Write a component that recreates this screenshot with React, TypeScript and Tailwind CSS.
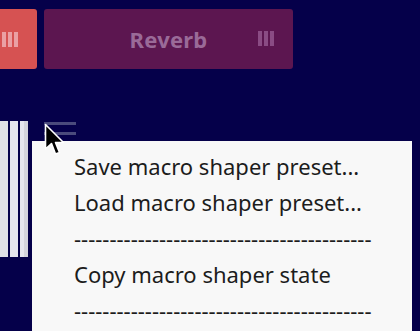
import React from "react";

function Grip({ className }: { className: string }) {
  return (
    <div className="flex gap-[2px]">
      <span className={`w-[4px] h-[15px] ${className}`} />
      <span className={`w-[4px] h-[15px] ${className}`} />
      <span className={`w-[4px] h-[15px] ${className}`} />
    </div>
  );
}

function Cursor() {
  return (
    <svg width="24" height="38" viewBox="0 0 24 38" className="absolute left-[44px] top-[123px]">
      <path
        d="M1.5 1.5 L1.5 26 L7.5 20.5 L11.5 31 L15.5 29.5 L11.5 19.5 L19.5 19.5 Z"
        fill="#000"
        stroke="#fff"
        strokeWidth="1.6"
        strokeLinejoin="round"
      />
    </svg>
  );
}

const dashes = "------------------------------------------";

const menuItems = [
  "Save macro shaper preset...",
  "Load macro shaper preset...",
  dashes,
  "Copy macro shaper state",
  dashes,
];

export default function App() {
  return (
    <div className="relative w-[420px] h-[331px] overflow-hidden bg-[#05004a] font-['Noto_Sans',sans-serif]">
      <div className="flex gap-[7px] pt-[9px]">
        <div className="w-[37px] h-[60px] bg-[#d65252] rounded-r-[3px] flex items-center pl-[2px]">
          <Grip className="bg-[#eaa0a4]" />
        </div>
        <div className="relative w-[249px] h-[60px] bg-[#5c1650] rounded-[3px] flex items-center justify-center">
          <span className="text-[22px] font-bold text-[#9a6a98] leading-none tracking-[0.2px]">Reverb</span>
          <div className="absolute left-[214px] top-[22px]">
            <Grip className="bg-[#8a4c84]" />
          </div>
        </div>
      </div>

      <div className="flex mt-[52px]">
        <div className="flex gap-[2px] h-[136px]">
          <span className="w-[8px] bg-[#e0e0e6]" />
          <span className="w-[8px] bg-[#e6e6ee]" />
          <span className="w-[8px] flex">
            <span className="w-[4px] bg-[#e6e6ee]" />
            <span className="w-[4px] bg-[#d4d4dc]" />
          </span>
        </div>
        <div className="ml-[16px] flex flex-col gap-[7px] pt-[1px]">
          <span className="w-[32px] h-[3px] bg-[#4a4a7c]" />
          <span className="w-[32px] h-[3px] bg-[#4a4a7c]" />
          <span className="w-[32px] h-[3px] bg-[#4a4a7c]" />
        </div>
      </div>

      <div className="absolute left-[32px] top-[141px] w-[380px] h-[200px] bg-[#f8f8f8] pt-[7px] pl-[42px]">
        {menuItems.map((item, i) => (
          <div key={i} className="text-[22px] leading-[36px] text-[#1c1c1c] whitespace-nowrap">
            {item}
          </div>
        ))}
      </div>

      <Cursor />
    </div>
  );
}
